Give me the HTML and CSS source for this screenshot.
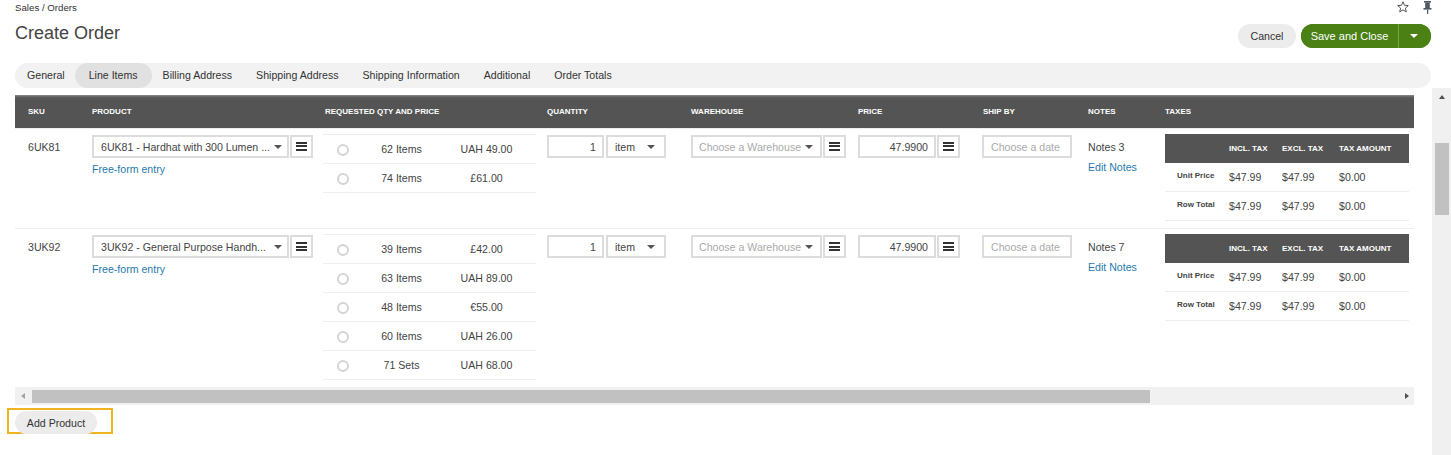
FILE: index.html
```html
<!DOCTYPE html>
<html lang="en">
<head>
<meta charset="utf-8">
<title>Create Order</title>
<link rel="stylesheet" href="styles.css">
</head>
<body>
<div class="page">
  <div class="top">
    <div class="crumb-row">
      <div class="crumb">Sales / Orders</div>
      <div class="page-icons">
        <svg class="star" width="12" height="12" viewBox="0 0 12 12"><path d="M6 0.8 L7.5 4.3 L11.3 4.6 L8.4 7.1 L9.3 10.9 L6 8.9 L2.7 10.9 L3.6 7.1 L0.7 4.6 L4.5 4.3 Z" fill="none" stroke="#555" stroke-width="1" stroke-linejoin="round"/></svg>
        <svg class="pin" width="9" height="13" viewBox="0 0 9 13"><rect x="1" y="0" width="7" height="1.6" fill="#4f5866"/><rect x="2.2" y="1.5" width="4.6" height="5.5" fill="#4f5866"/><rect x="0.5" y="7" width="8" height="1.6" fill="#4f5866"/><rect x="4" y="8.5" width="1.2" height="4.5" fill="#4f5866"/></svg>
      </div>
    </div>
    <div class="title-row">
      <h1 class="title">Create Order</h1>
      <div class="actions">
        <button class="btn btn-cancel">Cancel</button>
        <div class="btn-group">
          <button class="btn btn-save">Save and Close</button>
          <button class="btn btn-save-drop"><span class="caret caret-white"></span></button>
        </div>
      </div>
    </div>
    <div class="tabs">
      <span class="tab">General</span>
      <span class="tab tab-active">Line Items</span>
      <span class="tab">Billing Address</span>
      <span class="tab">Shipping Address</span>
      <span class="tab">Shipping Information</span>
      <span class="tab">Additional</span>
      <span class="tab">Order Totals</span>
    </div>
  </div>

  <div class="body-row">
    <div class="main">
      <div class="grid-view">
        <div class="grid-head">
          <div class="hc hc-sku">SKU</div>
          <div class="hc">PRODUCT</div>
          <div class="hc">REQUESTED QTY AND PRICE</div>
          <div class="hc">QUANTITY</div>
          <div class="hc">WAREHOUSE</div>
          <div class="hc">PRICE</div>
          <div class="hc">SHIP BY</div>
          <div class="hc">NOTES</div>
          <div class="hc">TAXES</div>
        </div>

        <div class="grid-row row-a">
          <div class="c c-sku"><div class="sku">6UK81</div></div>
          <div class="c">
            <div class="combo">
              <div class="field field-product"><span class="ftext">6UK81 - Hardhat with 300 Lumen ...</span><span class="caret"></span></div>
              <div class="field menu-btn"><span class="burger"></span></div>
            </div>
            <a class="link free-form">Free-form entry</a>
          </div>
          <div class="c c-qty">
            <div class="qty-table">
              <div class="qrow"><span class="radio"></span><span class="qn">62 Items</span><span class="qp">UAH 49.00</span></div>
              <div class="qrow"><span class="radio"></span><span class="qn">74 Items</span><span class="qp">£61.00</span></div>
            </div>
          </div>
          <div class="c">
            <div class="combo">
              <div class="field field-qty">1</div>
              <div class="field field-unit"><span class="ftext">item</span><span class="caret"></span></div>
            </div>
          </div>
          <div class="c">
            <div class="combo">
              <div class="field field-wh"><span class="ftext placeholder">Choose a Warehouse</span><span class="caret"></span></div>
              <div class="field menu-btn"><span class="burger"></span></div>
            </div>
          </div>
          <div class="c">
            <div class="combo">
              <div class="field field-price">47.9900</div>
              <div class="field menu-btn"><span class="burger"></span></div>
            </div>
          </div>
          <div class="c c-ship">
            <div class="field field-date"><span class="placeholder">Choose a date</span></div>
          </div>
          <div class="c">
            <div class="notes">Notes 3</div>
            <a class="link edit-notes">Edit Notes</a>
          </div>
          <div class="c">
            <div class="tax-table">
              <div class="trow thead-row"><span></span><span>INCL. TAX</span><span>EXCL. TAX</span><span>TAX AMOUNT</span></div>
              <div class="trow"><span class="tlabel">Unit Price</span><span>$47.99</span><span>$47.99</span><span>$0.00</span></div>
              <div class="trow"><span class="tlabel">Row Total</span><span>$47.99</span><span>$47.99</span><span>$0.00</span></div>
            </div>
          </div>
        </div>

        <div class="grid-row row-b">
          <div class="c c-sku"><div class="sku">3UK92</div></div>
          <div class="c">
            <div class="combo">
              <div class="field field-product"><span class="ftext">3UK92 - General Purpose Handh...</span><span class="caret"></span></div>
              <div class="field menu-btn"><span class="burger"></span></div>
            </div>
            <a class="link free-form">Free-form entry</a>
          </div>
          <div class="c c-qty">
            <div class="qty-table">
              <div class="qrow"><span class="radio"></span><span class="qn">39 Items</span><span class="qp">£42.00</span></div>
              <div class="qrow"><span class="radio"></span><span class="qn">63 Items</span><span class="qp">UAH 89.00</span></div>
              <div class="qrow"><span class="radio"></span><span class="qn">48 Items</span><span class="qp">€55.00</span></div>
              <div class="qrow"><span class="radio"></span><span class="qn">60 Items</span><span class="qp">UAH 26.00</span></div>
              <div class="qrow"><span class="radio"></span><span class="qn">71 Sets</span><span class="qp">UAH 68.00</span></div>
            </div>
          </div>
          <div class="c">
            <div class="combo">
              <div class="field field-qty">1</div>
              <div class="field field-unit"><span class="ftext">item</span><span class="caret"></span></div>
            </div>
          </div>
          <div class="c">
            <div class="combo">
              <div class="field field-wh"><span class="ftext placeholder">Choose a Warehouse</span><span class="caret"></span></div>
              <div class="field menu-btn"><span class="burger"></span></div>
            </div>
          </div>
          <div class="c">
            <div class="combo">
              <div class="field field-price">47.9900</div>
              <div class="field menu-btn"><span class="burger"></span></div>
            </div>
          </div>
          <div class="c c-ship">
            <div class="field field-date"><span class="placeholder">Choose a date</span></div>
          </div>
          <div class="c">
            <div class="notes">Notes 7</div>
            <a class="link edit-notes">Edit Notes</a>
          </div>
          <div class="c">
            <div class="tax-table">
              <div class="trow thead-row"><span></span><span>INCL. TAX</span><span>EXCL. TAX</span><span>TAX AMOUNT</span></div>
              <div class="trow"><span class="tlabel">Unit Price</span><span>$47.99</span><span>$47.99</span><span>$0.00</span></div>
              <div class="trow"><span class="tlabel">Row Total</span><span>$47.99</span><span>$47.99</span><span>$0.00</span></div>
            </div>
          </div>
        </div>
      </div>

      <div class="hscroll">
        <span class="harrow harrow-left"></span>
        <span class="hthumb"></span>
        <span class="hspacer"></span>
        <span class="harrow harrow-right"></span>
      </div>

      <div class="add-wrap">
        <button class="btn btn-add">Add Product</button>
      </div>
    </div>

    <div class="vscroll">
      <div class="varrow-box"><span class="varrow"></span></div>
      <div class="vthumb"></div>
    </div>
  </div>
</div>
</body>
</html>
```

FILE: styles.css
```css
* { box-sizing: border-box; }

html, body {
  margin: 0;
  padding: 0;
}

body {
  width: 1451px;
  height: 455px;
  overflow: hidden;
  background: #fff;
  color: #444;
  font-family: "Liberation Sans", Arial, sans-serif;
  font-size: 10.6px;
}

.page {
  display: flex;
  flex-direction: column;
  height: 455px;
}

/* ---------- top ---------- */
.top {
  padding: 0 20px 0 15px;
}

.crumb-row {
  display: flex;
  align-items: center;
  height: 14px;
}

.crumb {
  flex: 1;
  font-size: 9.7px;
  color: #333;
}

.page-icons {
  display: flex;
  align-items: center;
  gap: 14px;
  margin-right: -1px;
}

.star { display: block; }
.pin { display: block; }

.title-row {
  display: flex;
  justify-content: space-between;
  align-items: flex-start;
  margin-top: 10px;
  height: 24px;
}

.title {
  margin: 0;
  font-size: 18px;
  line-height: 18px;
  font-weight: normal;
  color: #444;
}

.actions {
  display: flex;
  gap: 5px;
}

.btn {
  border: none;
  font-family: "Liberation Sans", Arial, sans-serif;
  font-size: 10.6px;
  height: 24px;
  padding: 0;
  cursor: pointer;
}

.btn-cancel {
  width: 58px;
  border-radius: 12px;
  background: #ececec;
  color: #333;
}

.btn-group {
  display: flex;
  height: 24px;
  border-radius: 12px;
  overflow: hidden;
  background: #4a8014;
}

.btn-save {
  width: 98px;
  background: #4a8014;
  color: #fff;
  font-size: 11px;
  border-right: 1px solid #7aa34f;
}

.btn-save-drop {
  width: 32px;
  background: #4a8014;
  display: flex;
  align-items: center;
  justify-content: center;
}

.caret {
  display: inline-block;
  width: 0;
  height: 0;
  border-left: 4px solid transparent;
  border-right: 4px solid transparent;
  border-top: 4px solid #555;
}

.caret-white {
  border-top-color: #fff;
  margin-left: -2px;
}

.tabs {
  display: flex;
  align-items: center;
  margin-top: 15px;
  height: 25px;
  background: #f2f2f2;
  border-radius: 13px;
}

.tab {
  height: 25px;
  line-height: 25px;
  padding: 0 12px;
  border-radius: 13px;
  color: #333;
  white-space: nowrap;
}

.tab-active {
  background: #e1e1e1;
  padding: 0 14px;
  margin: 0 -1px 0 -2px;
}

/* ---------- body ---------- */
.body-row {
  flex: 1;
  display: flex;
  min-height: 0;
}

.main {
  flex: 1;
  min-width: 0;
  padding: 7px 18px 0 15px;
  display: flex;
  flex-direction: column;
}

.grid-view {
  overflow: hidden;
  width: 100%;
}

.grid-head,
.grid-row {
  display: grid;
  grid-template-columns: 65px 233px 222px 144px 167px 125px 105px 77px 270px;
}

.grid-head {
  height: 33px;
  align-items: center;
  background: linear-gradient(#8d8d8d 0, #5f5f5f 2px, #545454 4px, #545454 100%);
  color: #fff;
  font-size: 8px;
  font-weight: bold;
}

.hc {
  padding-left: 12px;
  white-space: nowrap;
}

.hc-sku { padding-left: 13px; }

.grid-row {
  border-top: 1px solid #eee;
  align-items: start;
}

.row-a { height: 100px; }
.row-b { height: 159px; }

.c {
  padding: 6px 0 0 12px;
  white-space: nowrap;
}

.c-sku { padding-left: 13px; }

.sku {
  line-height: 24px;
  color: #444;
}

.combo {
  display: flex;
  gap: 1px;
}

.field {
  height: 23px;
  border: 2px solid #dcdcdc;
  background: #fff;
  display: flex;
  align-items: center;
  color: #444;
  white-space: nowrap;
  overflow: hidden;
}

.ftext {
  flex: 1;
  overflow: hidden;
  text-overflow: clip;
}

.field .caret {
  margin-left: 4px;
  flex: none;
}

.field-product {
  width: 198px;
  padding: 0 5px 0 7px;
}

.field-product .caret {
  margin-left: 2px;
}

.menu-btn {
  width: 23px;
  justify-content: center;
}

.burger {
  display: block;
  width: 11px;
  height: 9px;
  background: linear-gradient(#333 0, #333 2px, transparent 2px, transparent 3.5px, #333 3.5px, #333 5.5px, transparent 5.5px, transparent 7px, #333 7px, #333 9px);
}

.link {
  display: block;
  color: #1f7aab;
  cursor: pointer;
}

.free-form {
  margin-top: 3px;
  line-height: 16px;
}

.c-qty {
  padding-left: 10px;
}

.qty-table {
  width: 213px;
  margin-top: -1px;
  border-bottom: 1px solid #eee;
}

.qrow {
  display: grid;
  grid-template-columns: 40px 77px 1fr;
  align-items: center;
  height: 29px;
  border-top: 1px solid #eee;
  color: #444;
}

.radio {
  display: block;
  width: 12px;
  height: 12px;
  border: 2px solid #d4d4d4;
  border-radius: 50%;
  margin-left: 14px;
  margin-top: 1px;
}

.qn, .qp {
  text-align: center;
}

.qp { padding-right: 3px; }

.field-qty {
  width: 57px;
  justify-content: flex-end;
  padding-right: 6px;
}

.combo .field-unit {
  width: 60px;
  margin-left: 1px;
  padding: 0 9px 0 7px;
}

.field-wh {
  width: 132px;
  padding: 0 7px 0 6px;
}

.placeholder {
  color: #aaa;
}

.field-price {
  width: 78px;
  justify-content: flex-end;
  padding-right: 6px;
}

.c-ship {
  padding-left: 11px;
}

.field-date {
  width: 90px;
  padding-left: 7px;
}

.notes {
  line-height: 24px;
  color: #444;
}

.edit-notes {
  line-height: 16px;
  margin-top: 0;
}

.tax-table {
  width: 244px;
  margin-top: -1px;
}

.trow {
  display: grid;
  grid-template-columns: 56px 53px 57px 78px;
  height: 29px;
  align-items: center;
  border-bottom: 1px solid #eee;
  color: #444;
}

.trow span:first-child { padding-left: 12px; }
.trow span + span { padding-left: 8px; }

.thead-row {
  background: #545454;
  color: #fff;
  font-size: 8px;
  font-weight: bold;
  border-bottom: none;
  padding-top: 0;
}

.tlabel {
  align-self: start;
  padding-top: 8px;
  font-size: 8px;
  font-weight: bold;
  color: #444;
}

/* ---------- scrollbars ---------- */
.hscroll {
  display: flex;
  align-items: center;
  height: 18px;
  background: #f1f1f1;
}

.harrow {
  width: 0;
  height: 0;
  border-top: 3.5px solid transparent;
  border-bottom: 3.5px solid transparent;
}

.harrow-left {
  border-right: 4px solid #a3a3a3;
  margin: 0 7px 0 6px;
}

.hthumb {
  width: 1118px;
  height: 13px;
  background: #c1c1c1;
  margin-top: 1px;
}

.hspacer { flex: 1; }

.harrow-right {
  border-left: 4px solid #505050;
  margin: 0 5px 0 6px;
}

.add-wrap {
  margin: 3px 0 0 -8px;
  width: 106px;
  height: 26px;
  border: 2px solid #f0b41e;
  padding: 1px 0 0 6px;
}

.btn-add {
  width: 82px;
  height: 23px;
  border-radius: 12px;
  background: #ececec;
  color: #333;
}

.vscroll {
  width: 19px;
  background: #f0f0f0;
  display: flex;
  flex-direction: column;
  align-items: center;
}

.varrow-box {
  height: 17px;
  display: flex;
  align-items: center;
  justify-content: center;
  width: 100%;
  padding-left: 1px;
}

.varrow {
  width: 0;
  height: 0;
  border-left: 3.5px solid transparent;
  border-right: 3.5px solid transparent;
  border-bottom: 4px solid #505050;
}

.vthumb {
  margin-top: 38px;
  width: 14px;
  height: 72px;
  background: #c1c1c1;
}
```
